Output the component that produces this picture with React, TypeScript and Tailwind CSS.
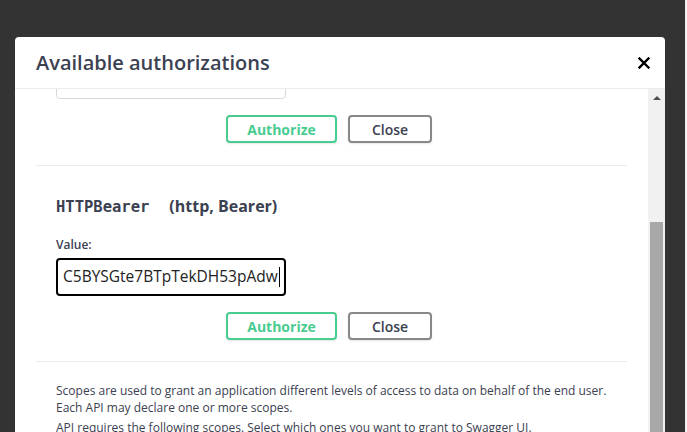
import React from 'react'

const sans = { fontFamily: '"Open Sans", "Noto Sans", sans-serif' }

function Buttons() {
  return (
    <div className="flex justify-center gap-[11px] pr-[5px]">
      <button className="h-[28px] w-[111px] rounded-[4px] border-2 border-[#49cc90] bg-white text-[14px] font-bold text-[#49cc90] shadow-[0_1px_2px_rgba(0,0,0,0.1)]">
        Authorize
      </button>
      <button className="h-[28px] w-[84px] rounded-[4px] border-2 border-[#888] bg-white text-[14px] font-semibold text-[#3b4151] shadow-[0_1px_2px_rgba(0,0,0,0.1)]">
        Close
      </button>
    </div>
  )
}

export default function App() {
  return (
    <div className="flex h-[432px] w-[687px] overflow-hidden bg-[#333]" style={sans}>
      <div className="flex-1 pl-[15px] pt-[37px]">
        <div className="flex h-[420px] w-[650px] flex-col overflow-hidden rounded-[4px] bg-white">
          {/* header */}
          <div className="flex h-[52px] shrink-0 items-center justify-between border-b border-[#ebebeb] pl-[21px] pr-[15px]">
            <h3 className="text-[20px] font-semibold text-[#3b4151]">Available authorizations</h3>
            <svg width="12" height="12" viewBox="0 0 12 12" className="mt-[1px]">
              <path d="M1.5 1.5 L10.5 10.5 M10.5 1.5 L1.5 10.5" stroke="#000" strokeWidth="2.4" strokeLinecap="square" />
            </svg>
          </div>

          {/* body */}
          <div className="flex flex-1 overflow-hidden">
            <div className="flex-1 overflow-hidden px-[21px]">
              <div className="mt-[-30px]">
                {/* first auth block (scrolled) */}
                <div className="border-b border-[#ebebeb] px-[20px] pb-[22px]">
                  <div className="h-[40px] w-[230px] rounded-[4px] border border-[#d9d9d9]" />
                  <div className="mt-[16px]">
                    <Buttons />
                  </div>
                </div>

                {/* HTTPBearer */}
                <div className="border-b border-[#ebebeb] px-[20px] pb-[21px] pt-[28px]">
                  <h4 className="flex items-baseline text-[16px] font-bold leading-[24px] text-[#3b4151]">
                    <code className="text-[15.5px] font-bold" style={{ fontFamily: '"DejaVu Sans Mono", monospace' }}>
                      HTTPBearer
                    </code>
                    <span className="ml-[20px]">(http, Bearer)</span>
                  </h4>
                  <div className="mt-[17px] text-[12px] font-semibold leading-[17px] text-[#3b4151]">Value:</div>
                  <div className="mt-[5px] flex h-[38px] w-[230px] items-center overflow-hidden rounded-[4px] border-2 border-black pl-[5px]">
                    <span className="whitespace-nowrap text-[15.5px] text-[#222]">C5BYSGte7BTpTekDH53pAdw</span>
                    <span className="ml-[1px] h-[20px] w-[1px] bg-black" />
                  </div>
                  <div className="mt-[16px]">
                    <Buttons />
                  </div>
                </div>

                {/* scopes text */}
                <div className="px-[20px] pt-[20px] text-[12px] leading-[17px] text-[#3b4151]">
                  <p>
                    Scopes are used to grant an application different levels of access to data on behalf of the end user.
                    <br />
                    Each API may declare one or more scopes.
                  </p>
                  <p className="mt-[3px]">API requires the following scopes. Select which ones you want to grant to Swagger UI.</p>
                </div>
              </div>
            </div>

            {/* scrollbar */}
            <div className="flex w-[17px] shrink-0 flex-col bg-[#f1f1f1]">
              <div className="flex h-[17px] items-center justify-center">
                <div className="h-0 w-0 border-x-[4px] border-b-[4px] border-x-transparent border-b-[#505050]" />
              </div>
              <div className="mx-[2px] mt-[116px] flex-1 bg-[#a8a8a8]" />
            </div>
          </div>
        </div>
      </div>
      <div className="w-[2px] bg-[#f0f0f0]" />
    </div>
  )
}
